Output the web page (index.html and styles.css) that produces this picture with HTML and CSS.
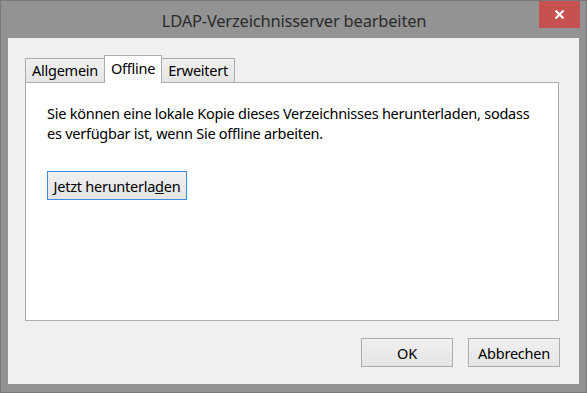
FILE: index.html
```html
<!DOCTYPE html>
<html lang="de">
<head>
  <meta charset="UTF-8">
  <title>LDAP-Verzeichnisserver bearbeiten</title>
  <link rel="stylesheet" href="styles.css">
</head>
<body>
  <div class="window">
    <div class="titlebar">
      <div class="title">LDAP-Verzeichnisserver bearbeiten</div>
      <button class="close-btn" title="Schließen">
        <svg width="11" height="11" viewBox="0 0 11 11">
          <path d="M1.5 1.5 L9.5 9.5 M9.5 1.5 L1.5 9.5" stroke="#fff" stroke-width="2.2" />
        </svg>
      </button>
    </div>

    <div class="client">
      <div class="tabs">
        <div class="tab">Allgemein</div>
        <div class="tab active">Offline</div>
        <div class="tab">Erweitert</div>
      </div>

      <div class="panel">
        <p class="info">Sie können eine lokale Kopie dieses Verzeichnisses herunterladen, sodass es verfügbar ist, wenn Sie offline arbeiten.</p>
        <button class="btn focused">Jetzt herunterla<u>d</u>en</button>
      </div>

      <div class="footer">
        <button class="btn dlg">OK</button>
        <button class="btn dlg">Abbrechen</button>
      </div>
    </div>
  </div>
</body>
</html>
```

FILE: styles.css
```css
body {
  margin: 0;
  font-family: 'Noto Sans', 'Open Sans', sans-serif;
  font-size: 14.5px;
  letter-spacing: -0.25px;
  color: #000;
}

.window {
  width: 587px;
  height: 393px;
  box-sizing: border-box;
  border: 1px solid #7a7a7a;
  background: #939393;
  padding: 0 7px 8px 7px;
  display: flex;
  flex-direction: column;
}

.titlebar {
  height: 37px;
  display: grid;
  grid-template-columns: 1fr auto 1fr;
  margin-right: -1px;
}

.title {
  grid-column: 2;
  font-size: 16.5px;
  letter-spacing: -0.2px;
  color: #2b2b2b;
  line-height: 40px;
}

.close-btn {
  grid-column: 3;
  justify-self: end;
  width: 41px;
  height: 27px;
  padding: 0;
  border: none;
  background: #c75050;
  display: flex;
  align-items: center;
  justify-content: center;
}

.client {
  flex: 1;
  background: #f0f0f0;
  padding: 17px 20px 17px 17px;
  display: flex;
  flex-direction: column;
}

.tabs {
  display: flex;
  align-items: flex-end;
  height: 27px;
  position: relative;
  z-index: 1;
}

.tab {
  height: 24px;
  box-sizing: border-box;
  padding: 0 6px;
  margin-right: -1px;
  border: 1px solid #acacac;
  border-bottom: none;
  background: linear-gradient(#f0f0f0, #e5e5e5);
  line-height: 22px;
}

.tab.active {
  height: 28px;
  margin-bottom: -1px;
  background: #fff;
  line-height: 25px;
  padding: 0 6px;
}

.panel {
  flex: 1;
  background: #fff;
  border: 1px solid #adadad;
  padding: 20px 21px;
}

.info {
  margin: 0 0 28px 0;
  line-height: 20px;
}

.btn {
  font-family: inherit;
  font-size: 14.5px;
  letter-spacing: -0.25px;
  height: 29px;
  padding: 0 5px;
  border: 1px solid #acacac;
  background: linear-gradient(#f0f0f0, #e5e5e5);
  color: #000;
  white-space: nowrap;
}

.btn.focused {
  width: 140px;
  border-color: #3c8ce6;
}

.footer {
  margin-top: 17px;
  display: flex;
  justify-content: flex-end;
  gap: 15px;
  margin-right: -1px;
}

.btn.dlg {
  width: 92px;
}
```
